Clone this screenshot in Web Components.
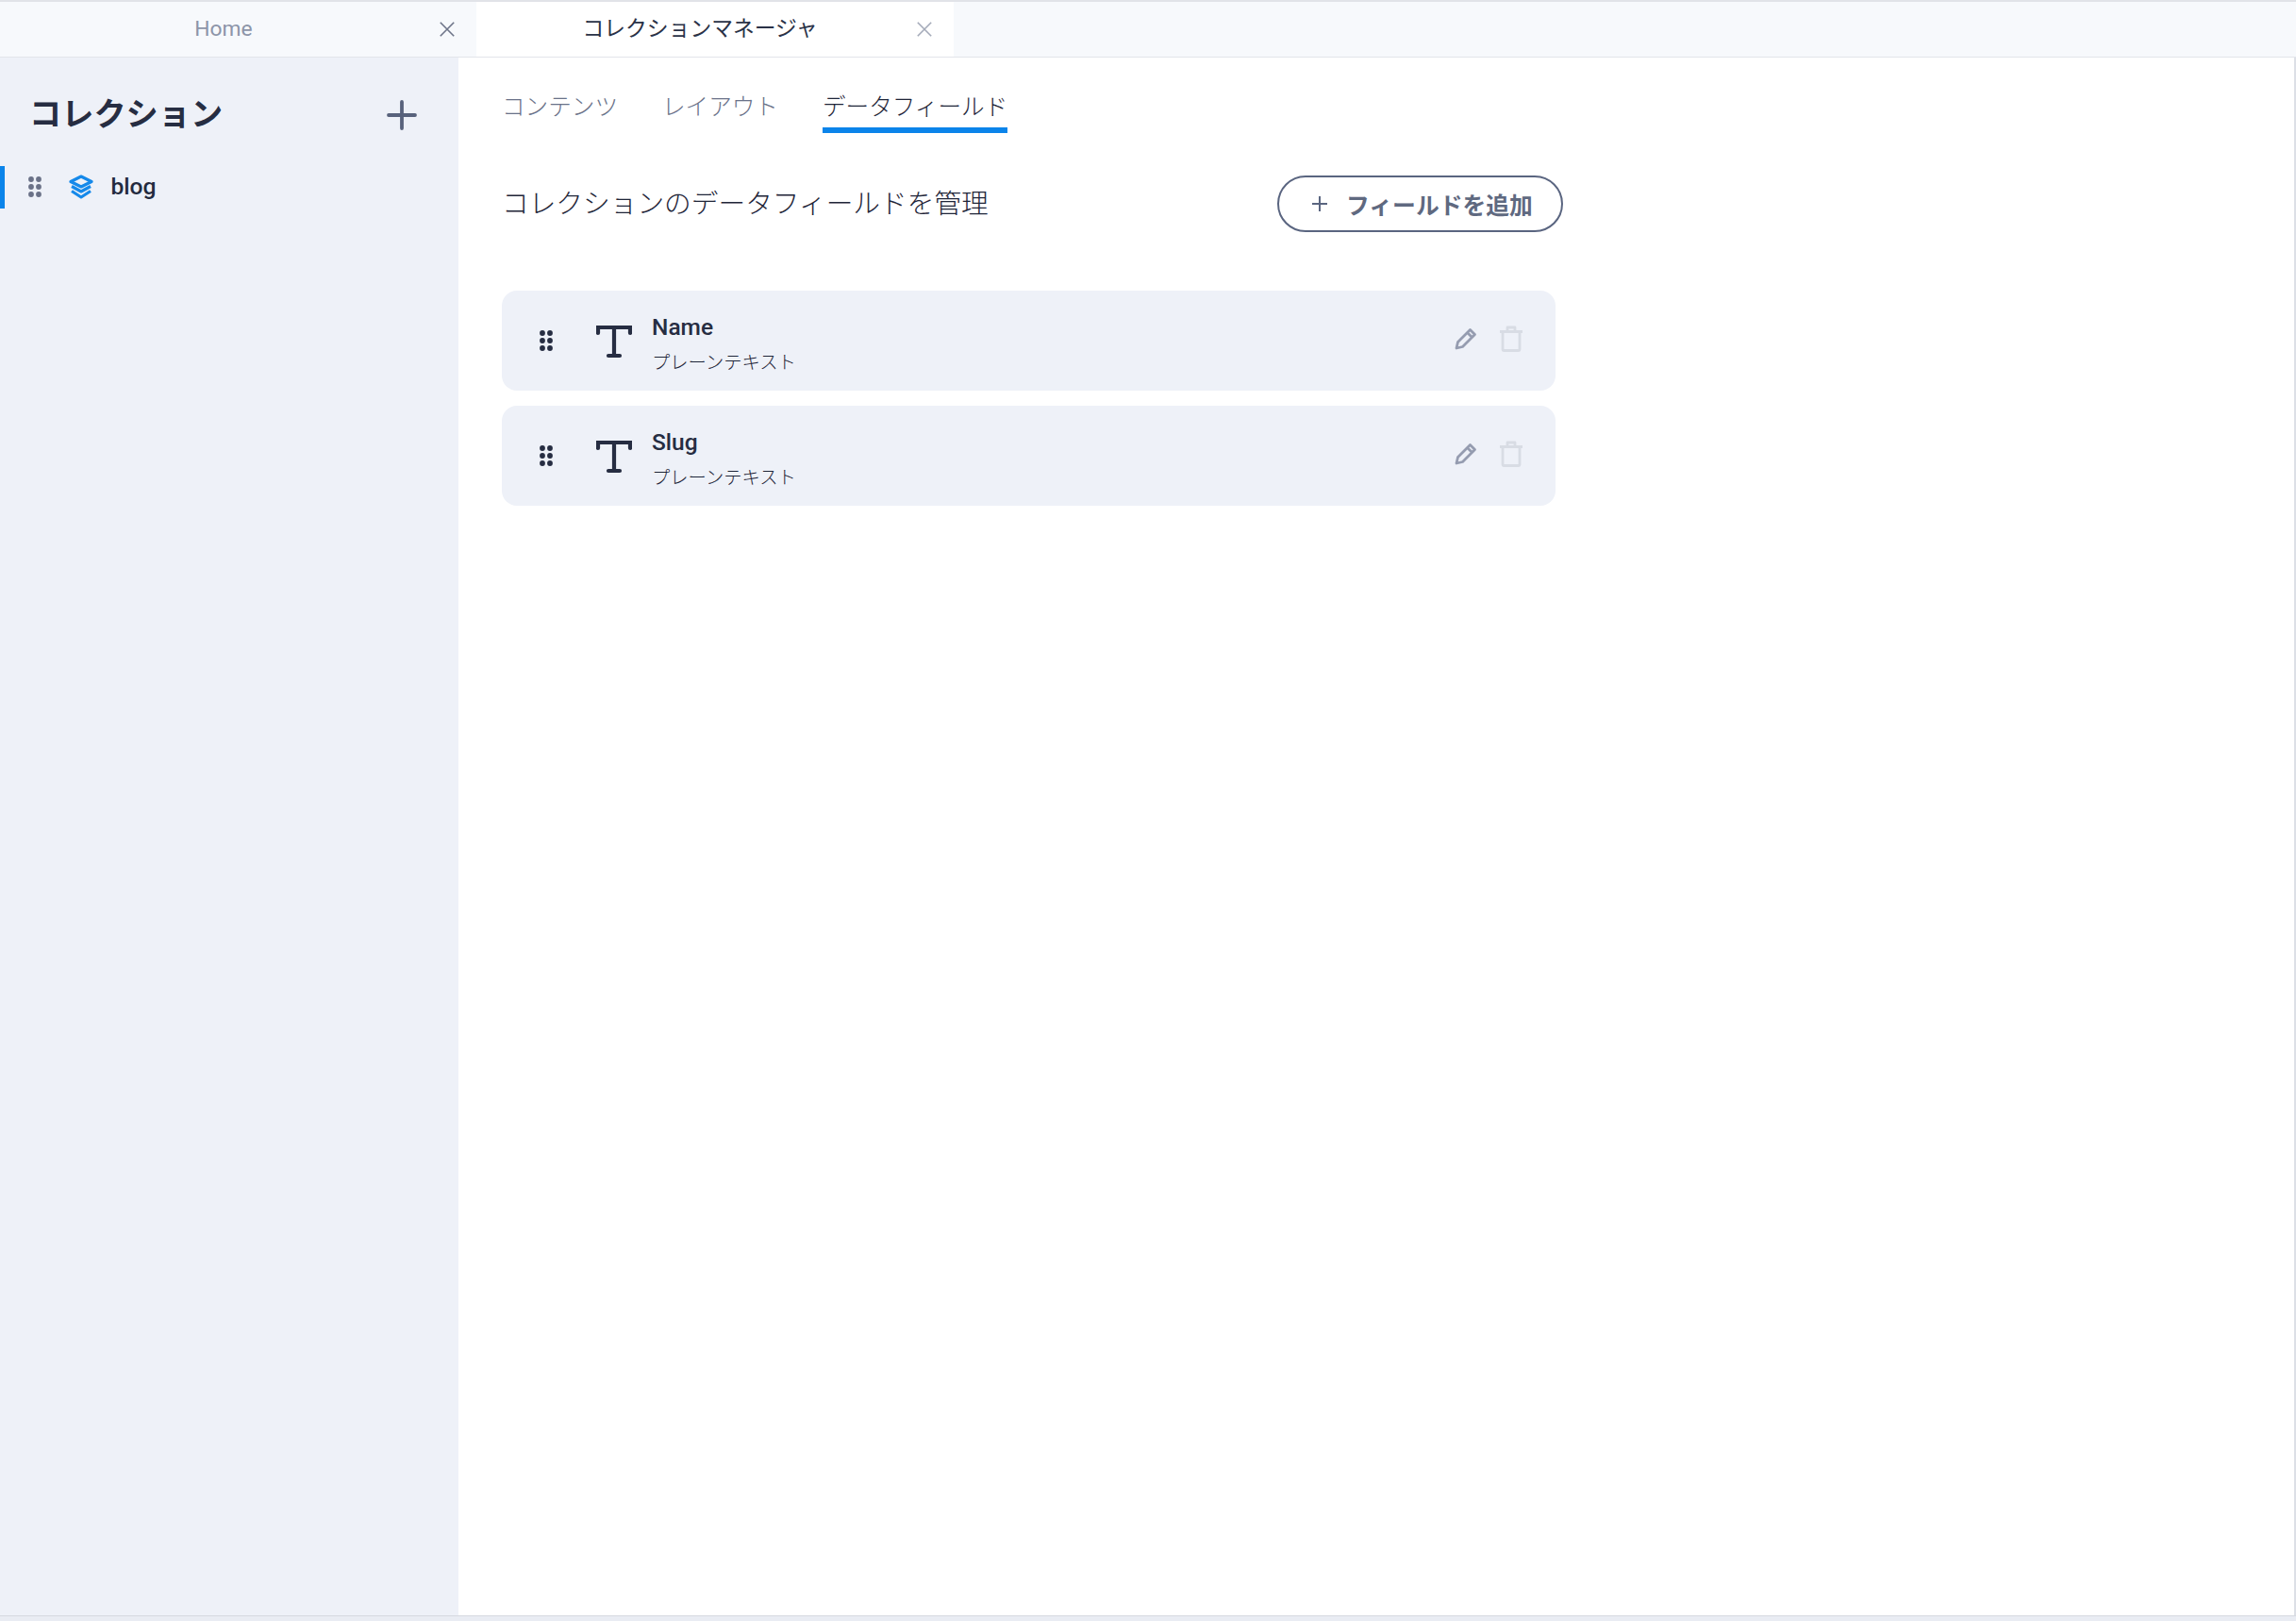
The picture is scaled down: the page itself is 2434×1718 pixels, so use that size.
<!DOCTYPE html>
<html lang="ja">
<head>
<meta charset="utf-8">
<title>コレクションマネージャ</title>
<style>
  html, body { margin: 0; height: 100%; background: #e9ecf3; }
  body { font-family: Roboto, "Noto Sans CJK JP", sans-serif; overflow: hidden; }
</style>
</head>
<body>
<app-shell>
  <tab-bar slot="tabs">
    <tab-item label="Home"></tab-item>
    <tab-item label="コレクションマネージャ" active></tab-item>
  </tab-bar>
  <collection-panel slot="side" heading="コレクション">
    <collection-row name="blog"></collection-row>
  </collection-panel>
  <main-pane slot="main" heading="コレクションのデータフィールドを管理" action="フィールドを追加">
    <sub-tab slot="nav" label="コンテンツ"></sub-tab>
    <sub-tab slot="nav" label="レイアウト"></sub-tab>
    <sub-tab slot="nav" label="データフィールド" active></sub-tab>
    <field-card name="Name" kind="プレーンテキスト"></field-card>
    <field-card name="Slug" kind="プレーンテキスト"></field-card>
  </main-pane>
</app-shell>

<script>
const DOTS = `
  <circle cx="3" cy="3" r="2.9"/><circle cx="11" cy="3" r="2.9"/>
  <circle cx="3" cy="11" r="2.9"/><circle cx="11" cy="11" r="2.9"/>
  <circle cx="3" cy="19" r="2.9"/><circle cx="11" cy="19" r="2.9"/>`;

class AppShell extends HTMLElement {
  constructor() {
    super();
    this.attachShadow({ mode: "open" });
    this.shadowRoot.innerHTML = `
      <style>
        :host { display: flex; flex-direction: column; width: 2434px; height: 1718px; box-sizing: border-box; padding-bottom: 5px; }
        .body { flex: 1; display: flex; min-height: 0; border-bottom: 1px solid #d6d9e0; }
        .main { flex: 1; min-width: 0; display: flex; border-right: 2px solid #dcdfe6; background: #fff; }
      </style>
      <slot name="tabs"></slot>
      <div class="body">
        <slot name="side"></slot>
        <div class="main"><slot name="main"></slot></div>
      </div>`;
  }
}

class TabBar extends HTMLElement {
  constructor() {
    super();
    this.attachShadow({ mode: "open" });
    this.shadowRoot.innerHTML = `
      <style>
        :host { display: flex; height: 58px; background: #f7f9fc; border-top: 2px solid #e1e3e8; border-bottom: 1px solid #e2e5ea; }
      </style>
      <slot></slot>`;
  }
}

class TabItem extends HTMLElement {
  constructor() {
    super();
    this.attachShadow({ mode: "open" });
  }
  connectedCallback() {
    this.shadowRoot.innerHTML = `
      <style>
        :host { display: flex; align-items: center; width: 505px; height: 58px; box-sizing: border-box; font-size: 22.8px; color: #8d95a9; }
        :host([active]) { background: #fff; color: #2a3247; width: 506px; }
        .label { width: 474px; flex: none; text-align: center; margin-top: -1px; white-space: nowrap; }
        :host([active]) .label { margin-top: -5px; }
        svg { width: 16px; height: 16px; margin-left: -8px; flex: none; stroke: #6d7488; stroke-width: 1.6; fill: none; }
        :host([active]) svg { stroke: #a4aab9; margin-left: -7px; }
      </style>
      <span class="label">${this.getAttribute("label")}</span>
      <svg viewBox="0 0 16 16"><path d="M.8 .8 15.2 15.2M15.2 .8 .8 15.2"/></svg>`;
  }
}

class CollectionPanel extends HTMLElement {
  constructor() {
    super();
    this.attachShadow({ mode: "open" });
  }
  connectedCallback() {
    this.shadowRoot.innerHTML = `
      <style>
        :host { display: block; width: 486px; height: 100%; flex: none; background: #eef1f8; }
        .head { display: flex; align-items: center; justify-content: space-between; height: 115px; padding: 0 44px 0 31px; box-sizing: border-box; }
        h2 { margin: 0 0 2px; font-size: 34.2px; font-weight: 700; color: #262d42; white-space: nowrap; }
        svg { width: 32px; height: 32px; margin-top: 6px; stroke: #58627c; stroke-width: 3.8; stroke-linecap: round; }
      </style>
      <div class="head">
        <h2>${this.getAttribute("heading")}</h2>
        <svg viewBox="0 0 32 32"><path d="M16 2V30M2 16H30"/></svg>
      </div>
      <slot></slot>`;
  }
}

class CollectionRow extends HTMLElement {
  constructor() {
    super();
    this.attachShadow({ mode: "open" });
  }
  connectedCallback() {
    this.shadowRoot.innerHTML = `
      <style>
        :host { display: flex; align-items: center; height: 45px; border-left: 5.5px solid #0b84ea; font-size: 24.6px; font-weight: 500; color: #232a3e; }
        .dots { width: 14px; height: 22px; margin-left: 24.5px; margin-top: -2px; fill: #6a7187; }
        .layers { width: 26px; height: 26px; margin-left: 29px; margin-top: -1px; fill: none; stroke: #1589ea; stroke-width: 3.2; stroke-linejoin: round; }
        span { margin-left: 19px; margin-top: -3px; }
      </style>
      <svg class="dots" viewBox="0 0 14 22">${DOTS}</svg>
      <svg class="layers" viewBox="0 0 26 26">
        <path d="M13 2 24 7.5 13 13 2 7.5Z"/>
        <path d="M3 12.5 13 18 23 12.5"/>
        <path d="M3 17.5 13 24 23 17.5"/>
      </svg>
      <span>${this.getAttribute("name")}</span>`;
  }
}

class SubTab extends HTMLElement {
  constructor() {
    super();
    this.attachShadow({ mode: "open" });
  }
  connectedCallback() {
    this.shadowRoot.innerHTML = `
      <style>
        :host { display: block; height: 47px; box-sizing: border-box; font-size: 24.6px; line-height: 39px; color: #6a7289; font-weight: 300; white-space: nowrap; }
        :host([active]) { color: #1f2639; border-bottom: 6px solid #0b84ea; }
      </style>
      ${this.getAttribute("label")}`;
  }
}

class MainPane extends HTMLElement {
  constructor() {
    super();
    this.attachShadow({ mode: "open" });
  }
  connectedCallback() {
    this.shadowRoot.innerHTML = `
      <style>
        :host { display: block; flex: 1; box-sizing: border-box; padding: 0 0 0 46px; }
        nav { display: flex; gap: 47px; padding-top: 33px; height: 125px; box-sizing: border-box; align-items: flex-start; }
        .row { display: flex; align-items: center; justify-content: space-between; width: 1125px; height: 60px; margin-bottom: 62px; }
        h3 { margin: 0 0 6px; font-size: 28.7px; font-weight: 300; color: #1f2639; white-space: nowrap; }
        button { display: flex; align-items: center; width: 303px; height: 60px; padding: 0 0 0 34px; box-sizing: border-box; background: #fff; border: 2px solid #5a6580; border-radius: 30px; font: 700 24.8px Roboto, "Noto Sans CJK JP", sans-serif; color: #5f6980; white-space: nowrap; }
        button svg { width: 18px; height: 18px; margin-right: 19px; stroke: #5a6580; stroke-width: 2; flex: none; }
        .list { display: flex; flex-direction: column; gap: 16px; width: 1117px; }
      </style>
      <nav><slot name="nav"></slot></nav>
      <div class="row">
        <h3>${this.getAttribute("heading")}</h3>
        <button><svg viewBox="0 0 18 18"><path d="M9 1V17M1 9H17"/></svg>${this.getAttribute("action")}</button>
      </div>
      <div class="list"><slot></slot></div>`;
  }
}

class FieldCard extends HTMLElement {
  constructor() {
    super();
    this.attachShadow({ mode: "open" });
  }
  connectedCallback() {
    this.shadowRoot.innerHTML = `
      <style>
        :host { display: flex; align-items: center; height: 106px; background: #eef1f8; border-radius: 16px; color: #262d42; }
        .dots { width: 14px; height: 22px; margin-left: 40px; fill: #262d42; flex: none; }
        .type { width: 38px; height: 36px; margin-left: 46px; margin-top: 1px; flex: none; fill: none; stroke: #262d42; stroke-width: 4.2; stroke-linecap: round; }
        .text { margin-left: 21px; flex: 1; display: flex; flex-direction: column; }
        .name { font-size: 24.5px; font-weight: 500; line-height: 28px; margin-top: 9px; }
        .kind { font-size: 19.3px; font-weight: 300; line-height: 28px; margin-top: 10px; color: #1f2639; white-space: nowrap; }
        .pencil { width: 24px; height: 24px; flex: none; margin-top: -4px; margin-right: 1px; fill: none; stroke: #959cb0; stroke-width: 2.8; stroke-linejoin: round; }
        .trash { width: 26px; height: 28px; flex: none; margin: -4px 34px 0 22px; fill: none; stroke: #d8dce4; stroke-width: 2.8; stroke-linejoin: round; }
      </style>
      <svg class="dots" viewBox="0 0 14 22">${DOTS}</svg>
      <svg class="type" viewBox="0 0 38 36"><path d="M2 9V3H36V9M19 3V33M13 33H25"/></svg>
      <div class="text">
        <span class="name">${this.getAttribute("name")}</span>
        <span class="kind">${this.getAttribute("kind")}</span>
      </div>
      <svg class="pencil" viewBox="0 0 24 24"><path d="M2 22 3.5 15.5 16.5 2.5 21.5 7.5 8.5 20.5ZM13.5 5.5 18.5 10.5"/></svg>
      <svg class="trash" viewBox="0 0 26 28"><path d="M1 6.5H25M4 6.5V25.5Q4 26.5 5 26.5H21Q22 26.5 22 25.5V6.5M9 6.5V2H17V6.5"/></svg>`;
  }
}

customElements.define("app-shell", AppShell);
customElements.define("tab-bar", TabBar);
customElements.define("tab-item", TabItem);
customElements.define("collection-panel", CollectionPanel);
customElements.define("collection-row", CollectionRow);
customElements.define("sub-tab", SubTab);
customElements.define("main-pane", MainPane);
customElements.define("field-card", FieldCard);
</script>
</body>
</html>
